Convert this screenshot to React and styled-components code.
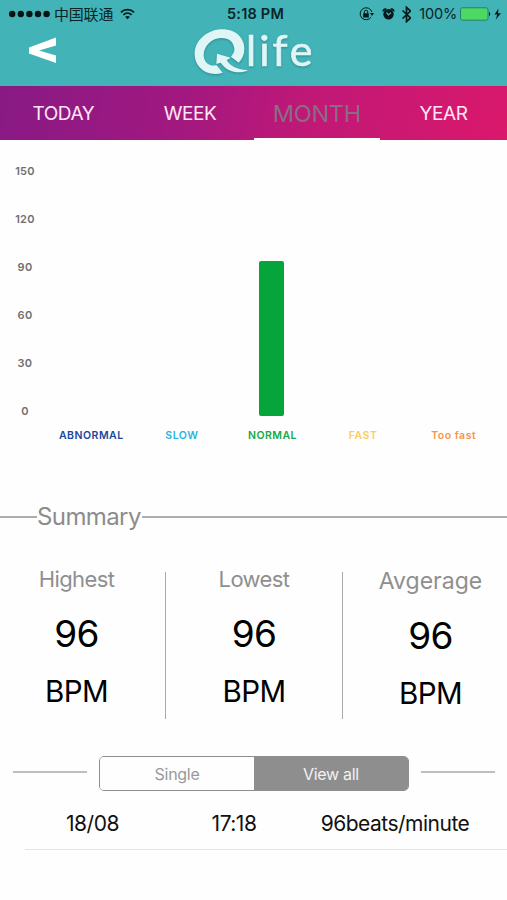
import React from "react";
import styled, { createGlobalStyle } from "styled-components";

const GlobalStyle = createGlobalStyle`
  * {
    box-sizing: border-box;
  }
  body {
    margin: 0;
    background: #fefefe;
    font-family: Inter, "Liberation Sans", "Noto Sans CJK SC", sans-serif;
  }
`

const Screen = styled.div`
  width: 507px;
  height: 900px;
  overflow: hidden;
  background: #fefefe;
`
const Header = styled.header`
  height: 86px;
  background: #42b3b7;
`
const StatusBar = styled.div`
  height: 27px;
  display: grid;
  grid-template-columns: 1fr auto 1fr;
  align-items: center;
  padding: 0 5px 0 9px;
  color: #0a2426;
`
const StatusSide = styled.div`
  display: flex;
  align-items: center;
  justify-content: ${(p) => (p.$end ? 'flex-end' : 'flex-start')};
  svg {
    flex: none;
  }
`
const Carrier = styled.span`
  font: 15px "Noto Sans CJK SC", sans-serif;
  line-height: 20px;
  letter-spacing: -0.2px;
  margin: 0 7px 0 4px;
`
const Clock = styled.span`
  font-size: 14.5px;
  font-weight: 600;
  letter-spacing: 0.2px;
`
const Percent = styled.span`
  font-size: 14.5px;
  letter-spacing: -0.2px;
  margin: 0 3px 0 8px;
`
const TitleBar = styled.div`
  display: flex;
  height: 59px;
  padding-left: 28px;
`
const BackButton = styled.button`
  border: 0;
  padding: 0;
  width: 30px;
  height: 48px;
  background: none;
`
const Logo = styled.div`
  display: flex;
  margin-left: 136px;
  filter: drop-shadow(0 1px 1px rgba(20, 90, 95, 0.45));
`
const LogoText = styled.span`
  font-family: Lato, sans-serif;
  font-size: 43px;
  line-height: 50px;
  letter-spacing: 3px;
  color: #dff5f6;
  -webkit-text-stroke: 0.7px #dff5f6;
  margin: -2px 0 0 -5px;
`

const Tabs = styled.nav`
  display: grid;
  grid-template-columns: repeat(4, 1fr);
  height: 54px;
  background: linear-gradient(100deg, #881a85 0%, #a11880 35%, #c01877 60%, #da186c 100%);
`
const Tab = styled.div`
  display: flex;
  align-items: center;
  justify-content: center;
  padding-top: 2px;
  font-size: ${(p) => (p.$active ? 23.5 : 19)}px;
  letter-spacing: ${(p) => (p.$active ? -0.3 : -0.4)}px;
  color: ${(p) => (p.$active ? '#8c6c82' : '#ffe6f6')};
  border-bottom: 2px solid ${(p) => (p.$active ? '#fff' : 'transparent')};
`

const Chart = styled.section`
  display: flex;
  height: 306px;
  padding: 7px 8px 0 0;
`
const Axis = styled.div`
  width: 46px;
  display: flex;
  flex-direction: column;
`
const Tick = styled.span`
  height: 48px;
  line-height: 48px;
  width: 50px;
  text-align: center;
  font-size: 11px;
  font-weight: 600;
  letter-spacing: 0.3px;
  color: #6f6f6f;
`
const Column = styled.div`
  flex: 1;
  display: flex;
  flex-direction: column;
  align-items: center;
`
const Plot = styled.div`
  height: 269px;
  display: flex;
  align-items: flex-end;
`
const Bar = styled.div`
  width: 25px;
  margin-right: 2px;
  border-radius: 2px;
  background: #06a53b;
`
const Category = styled.span`
  margin-top: 12px;
  font-size: 10.5px;
  line-height: 15px;
  font-weight: 600;
  letter-spacing: 0.5px;
  white-space: nowrap;
  color: ${(p) => p.$color};
`

const SummaryTitle = styled.h2`
  display: flex;
  align-items: center;
  margin: 53px 0 0;
  height: 35px;
  font-size: 24px;
  font-weight: 400;
  letter-spacing: -0.6px;
  color: #8c8c8c;
  &:before, &:after {
    content: "";
    height: 2px;
    background: #adadad;
  }
  &:before {
    width: 37px;
  }
  &:after {
    flex: 1;
    margin-left: 1px;
  }
`
const Stats = styled.section`
  display: grid;
  grid-template-columns: 166px 177px 1fr;
  height: 147px;
  margin-top: 38px;
`
const Stat = styled.div`
  display: flex;
  flex-direction: column;
  align-items: center;
  padding: ${(p) => p.$pad};
  border-right: ${(p) => (p.$last ? 0 : 1)}px solid #a9a9a9;
`
const StatLabel = styled.span`
  height: 15px;
  line-height: 15px;
  font-size: ${(p) => (p.$size || 22)}px;
  letter-spacing: ${(p) => (p.$size ? 0 : -0.6)}px;
  color: #8f8f8f;
`
const StatValue = styled.span`
  margin-top: 24px;
  height: 46px;
  line-height: 46px;
  font-size: 37px;
  letter-spacing: -0.6px;
  color: #000;
`
const StatUnit = styled.span`
  margin-top: 16px;
  height: 36px;
  line-height: 36px;
  font-size: 29.5px;
  letter-spacing: -0.6px;
  color: #000;
`

const SwitchRow = styled.div`
  display: flex;
  align-items: center;
  justify-content: space-between;
  height: 35px;
  margin-top: 37px;
  padding: 0 12px 0 13px;
`
const Rule = styled.div`
  width: 74px;
  height: 2px;
  margin-bottom: 3px;
  background: #bebebe;
`
const Segmented = styled.div`
  display: flex;
  width: 310px;
  height: 35px;
  border: 1px solid #8e8e8e;
  border-radius: 5px;
  overflow: hidden;
`
const Segment = styled.button`
  flex: 1;
  border: 0;
  padding: 0;
  font-family: inherit;
  font-size: 16px;
  letter-spacing: -0.3px;
  background: ${(p) => (p.$on ? '#8e8e8e' : '#fefefe')};
  color: ${(p) => (p.$on ? '#f2f2f2' : '#999')};
`
const Record = styled.div`
  display: grid;
  grid-template-columns: 135px 148px 1fr;
  align-items: center;
  height: 59px;
  margin-left: 25px;
  padding: 6px 25px 0 0;
  border-bottom: 1px solid #e4e4e4;
  font-size: 21px;
  letter-spacing: -0.5px;
  text-align: center;
  color: #111;
`

const ticks = [150, 120, 90, 60, 30, 0]
const categories = [
  { name: 'ABNORMAL', color: '#21459a', height: 0 },
  { name: 'SLOW', color: '#29b4e2', height: 0 },
  { name: 'NORMAL', color: '#15a84a', height: 155 },
  { name: 'FAST', color: '#fbcf5a', height: 0 },
  { name: 'Too fast', color: '#f79646', height: 0 },
]
const stats = [
  { label: 'Highest', pad: '0 12px 0 0' },
  { label: 'Lowest', pad: '0' },
  { label: 'Avgerage', pad: '2px 0 0 11px', size: 23 },
]

function SignalDots() {
  return (
    <svg width="41" height="8" viewBox="0 0 41 8" fill="#041314">
      {[3.2, 11.8, 20.4, 29, 37.6].map((x) => <circle key={x} cx={x} cy="4" r="3.2" />)}
    </svg>
  )
}

function Wifi() {
  return (
    <svg width="15" height="12" viewBox="0 0 16 12" fill="none" stroke="#06191a" strokeWidth="1.9">
      <path d="M1 4.2C5 .4 11 .4 15 4.2" />
      <path d="M3.6 6.9c2.6-2.4 6.2-2.4 8.8 0" />
      <path d="M8 11.6L5.4 9c1.5-1.3 3.7-1.3 5.2 0z" fill="#06191a" stroke="none" />
    </svg>
  )
}

function StatusIcons() {
  return (
    <svg width="52" height="18" viewBox="0 0 52 18" fill="#06191a">
      <path d="M12.2 12A6 6 0 1 1 12.9 7" fill="none" stroke="#06191a" strokeWidth="1" />
      <path d="M11 8h4l-2 3z" />
      <rect x="4.2" y="8.2" width="5.6" height="4.3" rx=".5" />
      <path d="M5.3 8.4V6.9a1.7 1.7 0 0 1 3.4 0v1.5" fill="none" stroke="#06191a" strokeWidth="1" />
      <circle cx="29.500" cy="9.200" r="5.2" />
      <path d="M23.500 7c-.5-3.500 3-4.500 4.500-3zM35.500 7c.5-3.500-3-4.500-4.500-3z" />
      <path d="M27.500 7.500l2 2.300 2.500-2" fill="none" stroke="#42b3b7" strokeWidth="1.200" />
      <path d="M43.500 5.500l8 7.500-4 3.600V2.400l4 3.600-8 7.500" fill="none" stroke="#06191a" strokeWidth="1.700" />
    </svg>
  )
}

function Battery() {
  return (
    <svg width="42" height="14" viewBox="0 0 42 14">
      <rect x=".5" y=".8" width="27.500" height="12.400" rx="2" fill="#4bd964" stroke="#287f69" />
      <path d="M29 5c1.500.3 1.500 3.700 0 4z" fill="#06191a" />
      <path d="M38.500 1.500L34.500 7.600h2.700l-1.400 5 5.200-6.400h-3z" fill="#06191a" />
    </svg>
  )
}

function LogoMark() {
  return (
    <svg width="57" height="48" viewBox="581 80 171 144" fill="#dff5f6">
      <path d="M667 217C625 232 583 204 583 162C583 119 622 87 666 87C706 87 732 112 732 145C732 161 726 176 715 187L692 169C699 161 703 154 702 145C700 124 684 112 662 113C632 114 610 139 610 164C610 187 630 201 648 194Z" />
      <path d="M650 160L691 172L679 180C690 198 710 208 743 210C715 223 680 215 661 187L648 191Z" />
    </svg>
  )
}

export default function App() {
  return (
    <>
      <GlobalStyle />
      <Screen>
        <Header>
          <StatusBar>
            <StatusSide>
              <SignalDots />
              <Carrier>中国联通</Carrier>
              <Wifi />
            </StatusSide>
            <Clock>5:18 PM</Clock>
            <StatusSide $end>
              <StatusIcons />
              <Percent>100%</Percent>
              <Battery />
            </StatusSide>
          </StatusBar>
          <TitleBar>
            <BackButton aria-label="Back">
              <svg width="30" height="28" viewBox="0 0 30 28" fill="#fff">
                <path d="M28 1.500v8L11 14.500l17 5v7.500L1 17.500v-6z" />
              </svg>
            </BackButton>
            <Logo>
              <LogoMark />
              <LogoText>life</LogoText>
            </Logo>
          </TitleBar>
        </Header>

        <Tabs>
          <Tab>TODAY</Tab>
          <Tab>WEEK</Tab>
          <Tab $active>MONTH</Tab>
          <Tab>YEAR</Tab>
        </Tabs>

        <Chart>
          <Axis>
            {ticks.map((t) => <Tick key={t}>{t}</Tick>)}
          </Axis>
          {categories.map((c) => (
            <Column key={c.name}>
              <Plot>
                <Bar style={{ height: c.height }} />
              </Plot>
              <Category $color={c.color}>{c.name}</Category>
            </Column>
          ))}
        </Chart>

        <SummaryTitle>Summary</SummaryTitle>
        <Stats>
          {stats.map((s, i) => (
            <Stat key={s.label} $pad={s.pad} $last={i === stats.length - 1}>
              <StatLabel $size={s.size}>{s.label}</StatLabel>
              <StatValue>96</StatValue>
              <StatUnit>BPM</StatUnit>
            </Stat>
          ))}
        </Stats>

        <SwitchRow>
          <Rule />
          <Segmented>
            <Segment>Single</Segment>
            <Segment $on>View all</Segment>
          </Segmented>
          <Rule />
        </SwitchRow>
        <Record>
          <span>18/08</span>
          <span>17:18</span>
          <span>96beats/minute</span>
        </Record>
      </Screen>
    </>
  )
}
